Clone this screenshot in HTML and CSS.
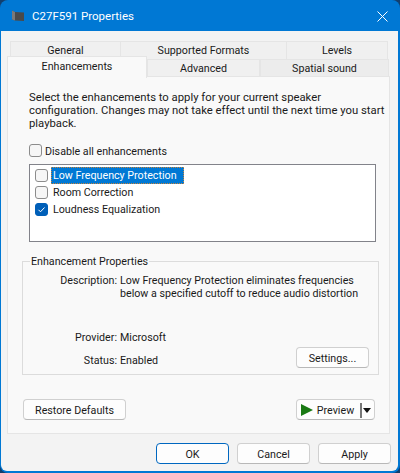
FILE: index.html
```html
<!DOCTYPE html>
<html lang="en">
<head>
    <meta charset="UTF-8">
    <title>C27F591 Properties</title>
    <link rel="stylesheet" href="styles.css">
</head>
<body>
<div class="window">
    <div class="titlebar">
        <svg class="app-icon" width="14" height="14" viewBox="0 0 14 14">
            <path d="M1 1.5 L4 3 L13 3.5 L13 12 L4 11.5 L1 10.5 Z" fill="#4a4a4a"/>
            <path d="M1 1.5 L4 3 L4 11.5 L1 10.5 Z" fill="#7a7a7a"/>
        </svg>
        <span class="title">C27F591 Properties</span>
        <svg class="close" width="11" height="11" viewBox="0 0 11 11">
            <path d="M0.5 0.5 L10.5 10.5 M10.5 0.5 L0.5 10.5" stroke="#fff" stroke-width="1" fill="none"/>
        </svg>
    </div>

    <div class="client">
        <div class="tabs">
            <div class="tab-row tab-row-top">
                <div class="tab t-general">General</div>
                <div class="tab t-formats">Supported Formats</div>
                <div class="tab t-levels">Levels</div>
            </div>
            <div class="tab-row tab-row-bottom">
                <div class="tab t-enh active">Enhancements</div>
                <div class="tab t-adv">Advanced</div>
                <div class="tab t-spatial">Spatial sound</div>
            </div>
        </div>

        <div class="panel">
            <p class="intro">Select the enhancements to apply for your current speaker<br>configuration. Changes may not take effect until the next time you start<br>playback.</p>

            <div class="check-line">
                <span class="check"></span>
                <span class="check-text">Disable all enhancements</span>
            </div>

            <div class="listbox">
                <div class="list-item">
                    <span class="check"></span>
                    <span class="selected">Low Frequency Protection</span>
                </div>
                <div class="list-item">
                    <span class="check"></span>
                    <span class="item-text">Room Correction</span>
                </div>
                <div class="list-item">
                    <span class="check checked">
                        <svg width="13" height="13" viewBox="0 0 13 13">
                            <path d="M3.5 6.8 L5.5 8.8 L9.5 4.5" stroke="#fff" stroke-width="1" fill="none"/>
                        </svg>
                    </span>
                    <span class="item-text">Loudness Equalization</span>
                </div>
            </div>

            <fieldset class="group">
                <legend>Enhancement Properties</legend>
                <div class="prop prop-desc">
                    <span class="prop-label">Description:</span>
                    <span class="prop-value">Low Frequency Protection eliminates frequencies<br>below a specified cutoff to reduce audio distortion</span>
                </div>
                <div class="prop prop-provider">
                    <span class="prop-label">Provider:</span>
                    <span class="prop-value">Microsoft</span>
                </div>
                <div class="prop prop-status">
                    <span class="prop-label">Status:</span>
                    <span class="prop-value">Enabled</span>
                    <button class="btn btn-settings">Settings...</button>
                </div>
            </fieldset>

            <div class="panel-actions">
                <button class="btn btn-restore">Restore Defaults</button>
                <div class="btn btn-preview">
                    <svg width="12" height="12" viewBox="0 0 12 12">
                        <path d="M0 0 L12 6 L0 12 Z" fill="#1a7a14"/>
                    </svg>
                    <span class="preview-label">Preview</span>
                    <span class="preview-sep"></span>
                    <span class="preview-arrow"></span>
                </div>
            </div>
        </div>

        <div class="footer">
            <button class="btn btn-foot btn-default">OK</button>
            <button class="btn btn-foot">Cancel</button>
            <button class="btn btn-foot">Apply</button>
        </div>
    </div>
</div>
</body>
</html>
```

FILE: styles.css
```css
* {
    margin: 0;
    padding: 0;
    box-sizing: border-box;
}

body {
    width: 400px;
    height: 473px;
    background-color: #123f6e;
    font: 10.7px/13px Roboto, "Liberation Sans", sans-serif;
    color: #1a1a1a;
    overflow: hidden;
}

.window {
    width: 400px;
    height: 473px;
    background-color: #0078d4;
    border-radius: 8px;
    padding: 0 2px 2px 1px;
    display: flex;
    flex-direction: column;
}

/* title bar */
.titlebar {
    height: 31px;
    display: flex;
    align-items: center;
    padding: 1px 10px 0 10px;
    color: #fff;
}

.app-icon {
    margin-right: 7px;
}

.title {
    flex: 1;
    font-size: 11.5px;
}

/* client area */
.client {
    flex: 1;
    background-color: #f3f3f3;
    border-radius: 0 0 6px 6px;
    padding: 0 0 0 6px;
    display: flex;
    flex-direction: column;
}

.tabs {
    height: 45px;
    padding-top: 10px;
}

.tab-row {
    display: flex;
}

.tab-row-top {
    margin-left: 3px;
    height: 18px;
}

.tab-row-bottom {
    height: 18px;
}

.tab {
    border: 1px solid #e5e5e5;
    border-bottom: none;
    background-color: #f0f0f0;
    text-align: center;
    line-height: 17px;
}

.t-general { width: 111px; }
.t-formats { width: 167px; margin-left: -1px; }
.t-levels { width: 102px; margin-left: -1px; }

.t-enh { width: 140px; }
.t-adv { width: 113px; }
.t-spatial { width: 129px; background-color: #ececec; }

.tab.active {
    position: relative;
    z-index: 2;
    height: 22px;
    margin-top: -3px;
    background-color: #f9f9f9;
    line-height: 19px;
}

.panel {
    width: 383px;
    height: 358px;
    background-color: #f9f9f9;
    border: 1px solid #e5e5e5;
    padding: 13px 0 0 21px;
}

.intro {
    padding-top: 1px;
    height: 40px;
    font-size: 11.3px;
    line-height: 13px;
    white-space: nowrap;
}

/* checkboxes */
.check-line {
    display: flex;
    align-items: flex-start;
    gap: 3px;
    margin-top: 14px;
    height: 13px;
}

.check-text {
    padding-top: 1px;
}

.check {
    width: 13px;
    height: 13px;
    border: 1px solid #8c8c8c;
    border-radius: 3px;
    background-color: #f6f6f6;
    flex-shrink: 0;
    display: block;
}

.check.checked {
    background-color: #005fb8;
    border-color: #005fb8;
}

.check.checked svg {
    display: block;
    margin: -1px;
}

.listbox {
    width: 347px;
    height: 78px;
    margin-top: 7px;
    border: 1px solid #82838a;
    background-color: #fff;
    padding: 2px 0 0 5px;
}

.list-item {
    height: 17px;
    display: flex;
    align-items: center;
    gap: 3px;
}

.selected {
    background-color: #0078d4;
    color: #fff;
    outline: 1px dotted #c9853a;
    outline-offset: -1px;
    padding: 2px 7px 2px 2px;
    line-height: 13px;
}

.item-text {
    padding-left: 2px;
}

/* group box */
.group {
    width: 357px;
    height: 121px;
    margin: 12px 0 0 -7px;
    border: 1px solid #dcdcdc;
    padding: 0;
    position: relative;
}

.group legend {
    margin-left: 7px;
    padding: 1px 1px 0;
}

.prop {
    display: flex;
    line-height: 13px;
}

.prop-label {
    width: 94px;
    text-align: right;
    margin-right: 3px;
}

.prop-value {
    white-space: nowrap;
}

.prop-desc {
    margin-top: 6px;
    height: 44px;
}

.prop-provider {
    margin-top: 13px;
}

.prop-status {
    margin-top: 10px;
    position: relative;
}

/* buttons */
.btn {
    font: inherit;
    color: inherit;
    background-color: #fdfdfd;
    border: 1px solid #d0d0d0;
    border-bottom-color: #b8b8b8;
    border-radius: 4px;
    height: 21px;
    padding-top: 1px;
    text-align: center;
}

.btn-settings {
    position: absolute;
    left: 273px;
    top: -7px;
    width: 73px;
}

.panel-actions {
    width: 352px;
    margin: 24px 0 0 -6px;
    display: flex;
    justify-content: space-between;
}

.btn-restore {
    width: 103px;
}

.btn-preview {
    width: 79px;
    display: flex;
    align-items: center;
    padding: 1px 0 0 4px;
}

.preview-label {
    margin-left: 3px;
    width: 39px;
}

.preview-sep {
    width: 2px;
    height: 15px;
    background-color: #777;
    margin-left: 5px;
}

.preview-arrow {
    width: 0;
    height: 0;
    margin-left: 1px;
    border-left: 4.5px solid transparent;
    border-right: 4.5px solid transparent;
    border-top: 5px solid #111;
}

.footer {
    flex: 1;
    display: flex;
    justify-content: flex-end;
    align-items: flex-start;
    gap: 8px;
    padding: 9px 7px 0 0;
}

.btn-foot {
    width: 73px;
}

.btn-default {
    border-color: #0067c0;
}
```
